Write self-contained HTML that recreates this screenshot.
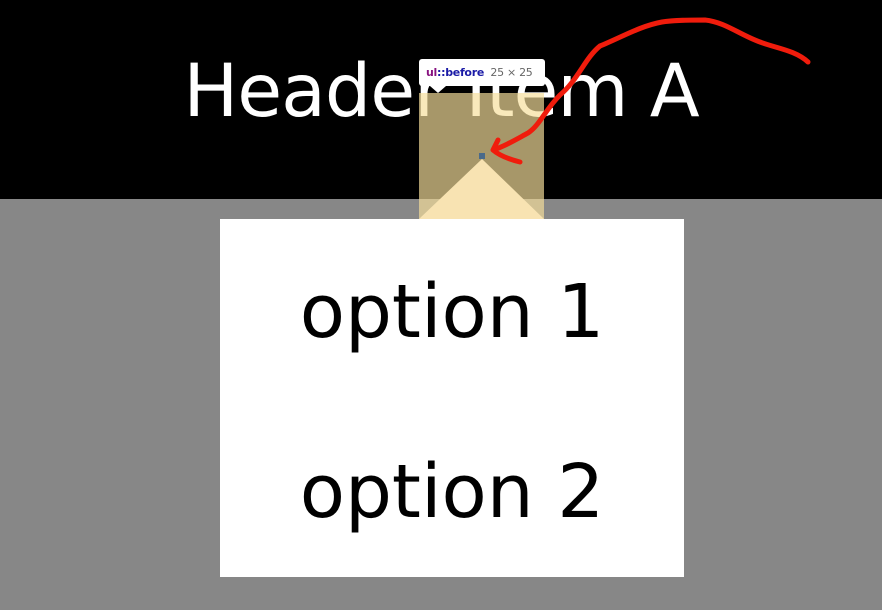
<!DOCTYPE html><html><head><style>
body{margin:0;width:882px;height:610px;background:#878787;position:relative;overflow:hidden;font-family:"Segoe UI","DejaVu Sans","Liberation Sans",sans-serif}
.hd{position:absolute;left:0;top:0;width:882px;height:199px;background:#000}
.ht{position:absolute;left:0;width:882px;top:42px;text-align:center;color:#fff;font-size:73px;line-height:100px;letter-spacing:-1px}
.box{position:absolute;left:220px;top:219px;width:464px;height:358px;background:#fff}
.op{position:absolute;left:220px;width:464px;text-align:center;font-size:74px;color:#000;line-height:100px}
.tip{position:absolute;left:419px;top:59px;width:126px;height:27px;background:#fff;border-radius:3px;font-size:11px;line-height:27px;box-sizing:border-box;padding-left:7px;color:#666;white-space:nowrap;letter-spacing:-0.3px}
</style></head><body>
<div class="hd"></div>
<div class="ht">Header Item A</div>
<div class="box"></div>
<div class="op" style="top:262px">option 1</div>
<div class="op" style="top:442px">option 2</div>
<svg style="position:absolute;left:0;top:0" width="882" height="610">
<rect x="419" y="93" width="125" height="126" fill="rgb(246,222,155)" fill-opacity="0.68"/>
<polygon points="482,159 419,219 544,219" fill="#f8e3b2"/>
<rect x="479" y="153" width="6" height="6" fill="#4a6a8a"/>
<polygon points="430,86 438,93 446,86" fill="#fff"/>
<path d="M808,62 C795,50 775,48 760,42 C740,35 725,22 705,20 C690,20 675,20 662,22 C640,26 620,38 600,46 C585,58 578,80 560,95 C545,110 540,125 528,133 C515,140 505,146 493,150 M493,150 C500,156 512,160 520,162 M493,150 L498,140" fill="none" stroke="#f01c0c" stroke-width="5" stroke-linecap="round" stroke-linejoin="round"/>
</svg>
<div class="tip"><b style="color:#881280">ul</b><b style="color:#1a1aa6">::before</b>&nbsp;&nbsp;25 × 25</div>
</body></html>
